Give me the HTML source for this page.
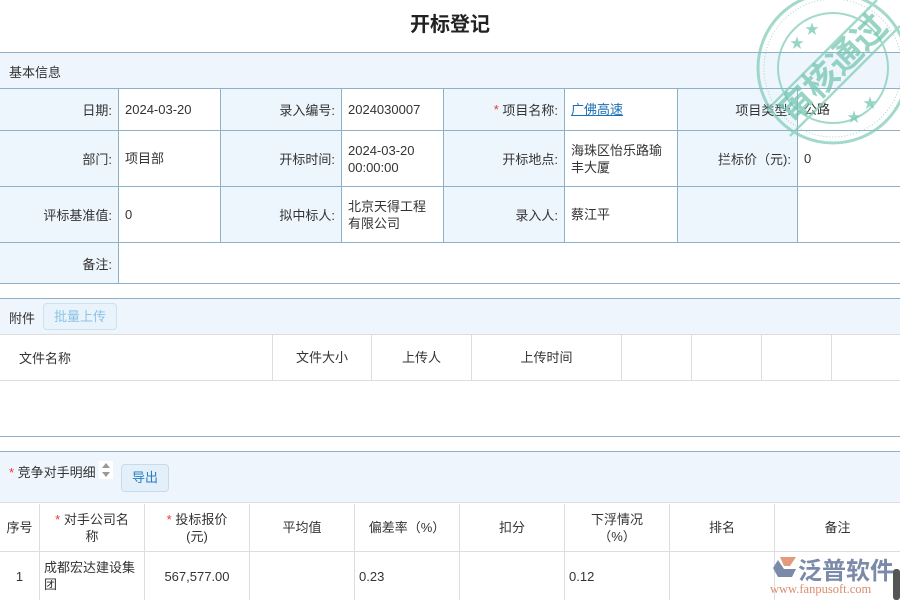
<!DOCTYPE html>
<html><head><meta charset="utf-8"><style>
*{margin:0;padding:0;box-sizing:border-box}
body{width:900px;height:600px;overflow:hidden;background:#fff;font-family:"Liberation Sans","Noto Sans CJK SC",sans-serif;font-size:13px;color:#333;position:relative}
.a{position:absolute}
.lb{position:absolute;background:#eef6fd;text-align:right;padding-right:6px;display:flex;align-items:center;justify-content:flex-end;border:1px solid #8fb0c6;border-left:none;border-top:none}
.vl{position:absolute;display:flex;align-items:center;padding-left:6px;border-right:1px solid #8fb0c6;border-bottom:1px solid #8fb0c6;line-height:17px}
.hl{position:absolute;left:0;width:900px;height:1px;background:#8fb0c6}
.th{position:absolute;display:flex;align-items:center;justify-content:center;text-align:center;border-right:1px solid #ddd;line-height:17px}
.r{color:#e33}
</style></head><body>
<div class="a" style="left:0;top:8px;width:900px;text-align:center;font-size:20px;font-weight:bold;color:#222">开标登记</div>

<div class="a" style="left:0;top:52px;width:900px;height:37px;background:#eef5fc;border-top:1px solid #8fb0c6;border-bottom:1px solid #8fb0c6"></div>
<div class="a" style="left:9px;top:62px">基本信息</div>

<div class="lb" style="left:0;top:89px;width:119px;height:42px">日期:</div>
<div class="vl" style="left:119px;top:89px;width:102px;height:42px">2024-03-20</div>
<div class="lb" style="left:221px;top:89px;width:121px;height:42px">录入编号:</div>
<div class="vl" style="left:342px;top:89px;width:102px;height:42px">2024030007</div>
<div class="lb" style="left:444px;top:89px;width:121px;height:42px"><span class="r">*</span>&nbsp;项目名称:</div>
<div class="vl" style="left:565px;top:89px;width:113px;height:42px;color:#1a6fb5;text-decoration:underline">广佛高速</div>
<div class="lb" style="left:678px;top:89px;width:120px;height:42px">项目类型:</div>
<div class="vl" style="left:798px;top:89px;width:102px;height:42px;border-right:none">公路</div>

<div class="lb" style="left:0;top:131px;width:119px;height:56px">部门:</div>
<div class="vl" style="left:119px;top:131px;width:102px;height:56px">项目部</div>
<div class="lb" style="left:221px;top:131px;width:121px;height:56px">开标时间:</div>
<div class="vl" style="left:342px;top:131px;width:102px;height:56px">2024-03-20<br>00:00:00</div>
<div class="lb" style="left:444px;top:131px;width:121px;height:56px">开标地点:</div>
<div class="vl" style="left:565px;top:131px;width:113px;height:56px">海珠区怡乐路瑜<br>丰大厦</div>
<div class="lb" style="left:678px;top:131px;width:120px;height:56px">拦标价（元):</div>
<div class="vl" style="left:798px;top:131px;width:102px;height:56px;border-right:none">0</div>

<div class="lb" style="left:0;top:187px;width:119px;height:56px">评标基准值:</div>
<div class="vl" style="left:119px;top:187px;width:102px;height:56px">0</div>
<div class="lb" style="left:221px;top:187px;width:121px;height:56px">拟中标人:</div>
<div class="vl" style="left:342px;top:187px;width:102px;height:56px">北京天得工程<br>有限公司</div>
<div class="lb" style="left:444px;top:187px;width:121px;height:56px">录入人:</div>
<div class="vl" style="left:565px;top:187px;width:113px;height:56px">蔡江平</div>
<div class="lb" style="left:678px;top:187px;width:120px;height:56px"></div>
<div class="vl" style="left:798px;top:187px;width:102px;height:56px;border-right:none"></div>

<div class="lb" style="left:0;top:243px;width:119px;height:41px">备注:</div>
<div class="vl" style="left:119px;top:243px;width:781px;height:41px;border-right:none"></div>

<div class="a" style="left:0;top:298px;width:900px;height:37px;background:#eef5fc;border-top:1px solid #8fb0c6;border-bottom:1px solid #ddd"></div>
<div class="a" style="left:9px;top:308px">附件</div>
<div class="a" style="left:43px;top:303px;width:74px;height:27px;border:1px solid #cfe0ee;border-radius:4px;background:#e9f3fb;color:#8ec2e6;text-align:center;line-height:25px">批量上传</div>
<div class="a" style="left:0;top:335px;width:900px;height:46px;border-bottom:1px solid #ddd"></div>
<div class="a" style="left:19px;top:348px">文件名称</div>
<div class="th" style="left:272px;top:335px;width:100px;height:45px;border-left:1px solid #ddd">文件大小</div>
<div class="th" style="left:372px;top:335px;width:100px;height:45px">上传人</div>
<div class="th" style="left:472px;top:335px;width:150px;height:45px">上传时间</div>
<div class="th" style="left:622px;top:335px;width:70px;height:45px"></div>
<div class="th" style="left:692px;top:335px;width:70px;height:45px"></div>
<div class="th" style="left:762px;top:335px;width:70px;height:45px"></div>
<div class="hl" style="top:436px"></div>

<div class="a" style="left:0;top:451px;width:900px;height:52px;background:#eef5fc;border-top:1px solid #8fb0c6;border-bottom:1px solid #ddd"></div>
<div class="a" style="left:9px;top:462px"><span class="r">*</span> 竞争对手明细</div>
<div class="a" style="left:99px;top:461px;width:14px;height:18px;background:#fff">
<svg width="14" height="18"><path d="M3 7 L7 2 L11 7Z M3 11 L7 16 L11 11Z" fill="#999"/></svg></div>
<div class="a" style="left:121px;top:464px;width:48px;height:28px;border:1px solid #c6dcec;border-radius:4px;background:#e3f0fa;color:#2b7bbf;text-align:center;line-height:26px">导出</div>

<div class="th" style="left:0;top:504px;width:40px;height:48px;border-bottom:1px solid #ddd">序号</div>
<div class="th" style="left:40px;top:504px;width:105px;height:48px;border-bottom:1px solid #ddd"><span><span class="r">*</span> 对手公司名<br>称</span></div>
<div class="th" style="left:145px;top:504px;width:105px;height:48px;border-bottom:1px solid #ddd"><span><span class="r">*</span> 投标报价<br>(元)</span></div>
<div class="th" style="left:250px;top:504px;width:105px;height:48px;border-bottom:1px solid #ddd">平均值</div>
<div class="th" style="left:355px;top:504px;width:105px;height:48px;border-bottom:1px solid #ddd">偏差率（%）</div>
<div class="th" style="left:460px;top:504px;width:105px;height:48px;border-bottom:1px solid #ddd">扣分</div>
<div class="th" style="left:565px;top:504px;width:105px;height:48px;border-bottom:1px solid #ddd">下浮情况<br>（%）</div>
<div class="th" style="left:670px;top:504px;width:105px;height:48px;border-bottom:1px solid #ddd">排名</div>
<div class="th" style="left:775px;top:504px;width:125px;height:48px;border-bottom:1px solid #ddd;border-right:none">备注</div>

<div class="th" style="left:0;top:552px;width:40px;height:48px">1</div>
<div class="th" style="left:40px;top:552px;width:105px;height:48px;justify-content:flex-start;text-align:left;padding-left:4px">成都宏达建设集<br>团</div>
<div class="th" style="left:145px;top:552px;width:105px;height:48px">567,577.00</div>
<div class="th" style="left:250px;top:552px;width:105px;height:48px"></div>
<div class="th" style="left:355px;top:552px;width:105px;height:48px;justify-content:flex-start;padding-left:4px">0.23</div>
<div class="th" style="left:460px;top:552px;width:105px;height:48px"></div>
<div class="th" style="left:565px;top:552px;width:105px;height:48px;justify-content:flex-start;padding-left:4px">0.12</div>
<div class="th" style="left:670px;top:552px;width:105px;height:48px"></div>

<svg class="a" style="left:745px;top:-12px" width="170" height="170" viewBox="0 0 170 170">
<g fill="none" stroke="#7ccab5" opacity="0.7">
<circle cx="88" cy="80" r="75" stroke-width="3"/>
<circle cx="88" cy="80" r="69" stroke-width="1" stroke-dasharray="1 2"/>
<circle cx="88" cy="80" r="55" stroke-width="2"/>
<line x1="22" y1="122" x2="132" y2="12" stroke-width="2.5"/>
<line x1="45" y1="148" x2="155" y2="38" stroke-width="2.5"/>
</g>
<text x="88" y="92" transform="rotate(-45 88 80)" text-anchor="middle" font-size="34" font-weight="bold" fill="#6cc3ac" opacity="0.7" font-family="Noto Sans CJK SC,sans-serif">审核通过</text>
<g fill="#7ccab5" opacity="0.8" font-size="14"><text x="45" y="60">★</text><text x="60" y="46">★</text><text x="102" y="134">★</text><text x="118" y="120">★</text></g>
</svg>

<div class="a" style="left:770px;top:553px;width:130px;height:47px">
<svg class="a" style="left:2px;top:3px" width="26" height="22"><path d="M8 1 H24 L18 10 H12Z" fill="#e49a7c"/><path d="M6 4 L1 12 L6 21 H20 L24 13 H12Z" fill="#7b8aa8"/></svg>
<div class="a" style="left:28px;top:-2px;font-size:24px;color:#7b8aa8;font-weight:bold">泛普软件</div>
<div class="a" style="left:0px;top:29px;font-size:12.5px;color:#d98c6c;font-family:'Liberation Serif',serif">www.fanpusoft.com</div>
<div class="a" style="left:123px;top:16px;width:7px;height:31px;background:#555;border-radius:3px"></div>
</div>
</body></html>
